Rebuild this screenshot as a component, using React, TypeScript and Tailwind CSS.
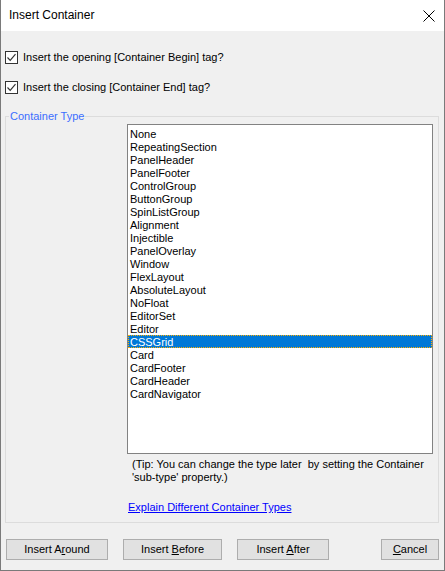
import React from "react";

const types = [
  "None",
  "RepeatingSection",
  "PanelHeader",
  "PanelFooter",
  "ControlGroup",
  "ButtonGroup",
  "SpinListGroup",
  "Alignment",
  "Injectible",
  "PanelOverlay",
  "Window",
  "FlexLayout",
  "AbsoluteLayout",
  "NoFloat",
  "EditorSet",
  "Editor",
  "CSSGrid",
  "Card",
  "CardFooter",
  "CardHeader",
  "CardNavigator",
];

function Check({ label }: { label: string }) {
  return (
    <label className="flex items-center h-[16px]">
      <span className="w-[13px] h-[13px] border border-[#333333] bg-white flex items-center justify-center">
        <svg width="11" height="11" viewBox="0 0 11 11">
          <path d="M1.5 5.5 L4.2 8.3 L9.5 2.2" fill="none" stroke="#333333" strokeWidth="1.2" />
        </svg>
      </span>
      <span className="ml-[5px]">{label}</span>
    </label>
  );
}

function Btn({ children, w }: { children: React.ReactNode; w: string }) {
  return (
    <button className={`${w} h-[21px] bg-[#e1e1e1] border border-[#adadad] text-black`}>
      {children}
    </button>
  );
}

export default function App() {
  const selected = "CSSGrid";

  return (
    <div className="w-[445px] h-[571px] flex flex-col border-x border-b border-[#7a7a7a] bg-[#f0f0f0] text-[11px] text-black font-['Liberation_Sans',Arial,sans-serif] leading-[13px]">
      <div className="h-[31px] bg-white flex items-center justify-between pl-[8px] pr-[8px] shrink-0">
        <span className="text-[12px]">Insert Container</span>
        <svg width="12" height="12" viewBox="0 0 12 12" className="mr-[1px]">
          <path d="M0.5 0.5 L11.5 11.5 M11.5 0.5 L0.5 11.5" stroke="#000" strokeWidth="1" />
        </svg>
      </div>

      <div className="flex flex-col pl-[4px] pr-[5px]">
        <div className="mt-[18px] flex flex-col gap-[14px]">
          <Check label="Insert the opening [Container Begin] tag?" />
          <Check label="Insert the closing [Container End] tag?" />
        </div>

        <div className="relative mt-[21px] h-[407px] border border-[#dcdcdc] flex flex-col pl-[121px] pr-[5px]">
          <span className="absolute -top-[7px] left-[3px] bg-[#f0f0f0] px-[1px] text-[#3c6eff]">
            Container Type
          </span>
          <div className="mt-[7px] h-[330px] border border-[#828282] bg-white pt-[2px] flex flex-col">
            {types.map((t) =>
              t === selected ? (
                <div
                  key={t}
                  className="h-[13px] leading-[15px] pl-[2px] bg-[#0078d7] text-white outline-1 outline-dotted outline-[#ffb000] -outline-offset-1"
                >
                  {t}
                </div>
              ) : (
                <div key={t} className="h-[13px] leading-[15px] pl-[2px]">
                  {t}
                </div>
              )
            )}
          </div>
          <div className="mt-[4px] pl-[5px]">
            (Tip: You can change the type later&nbsp; by setting the Container
            <br />
            'sub-type' property.)
          </div>
          <a className="mt-[17px] pl-[1px] text-[#0000ff] underline w-fit">
            Explain Different Container Types
          </a>
        </div>

        <div className="mt-[16px] flex items-center pl-[1px]">
          <Btn w="w-[102px]">
            Insert A<span className="underline">r</span>ound
          </Btn>
          <div className="ml-[15px]">
            <Btn w="w-[99px]">
              Insert <span className="underline">B</span>efore
            </Btn>
          </div>
          <div className="ml-[15px]">
            <Btn w="w-[92px]">
              Insert <span className="underline">A</span>fter
            </Btn>
          </div>
          <div className="ml-auto">
            <Btn w="w-[58px]">
              <span className="underline">C</span>ancel
            </Btn>
          </div>
        </div>
      </div>
    </div>
  );
}
